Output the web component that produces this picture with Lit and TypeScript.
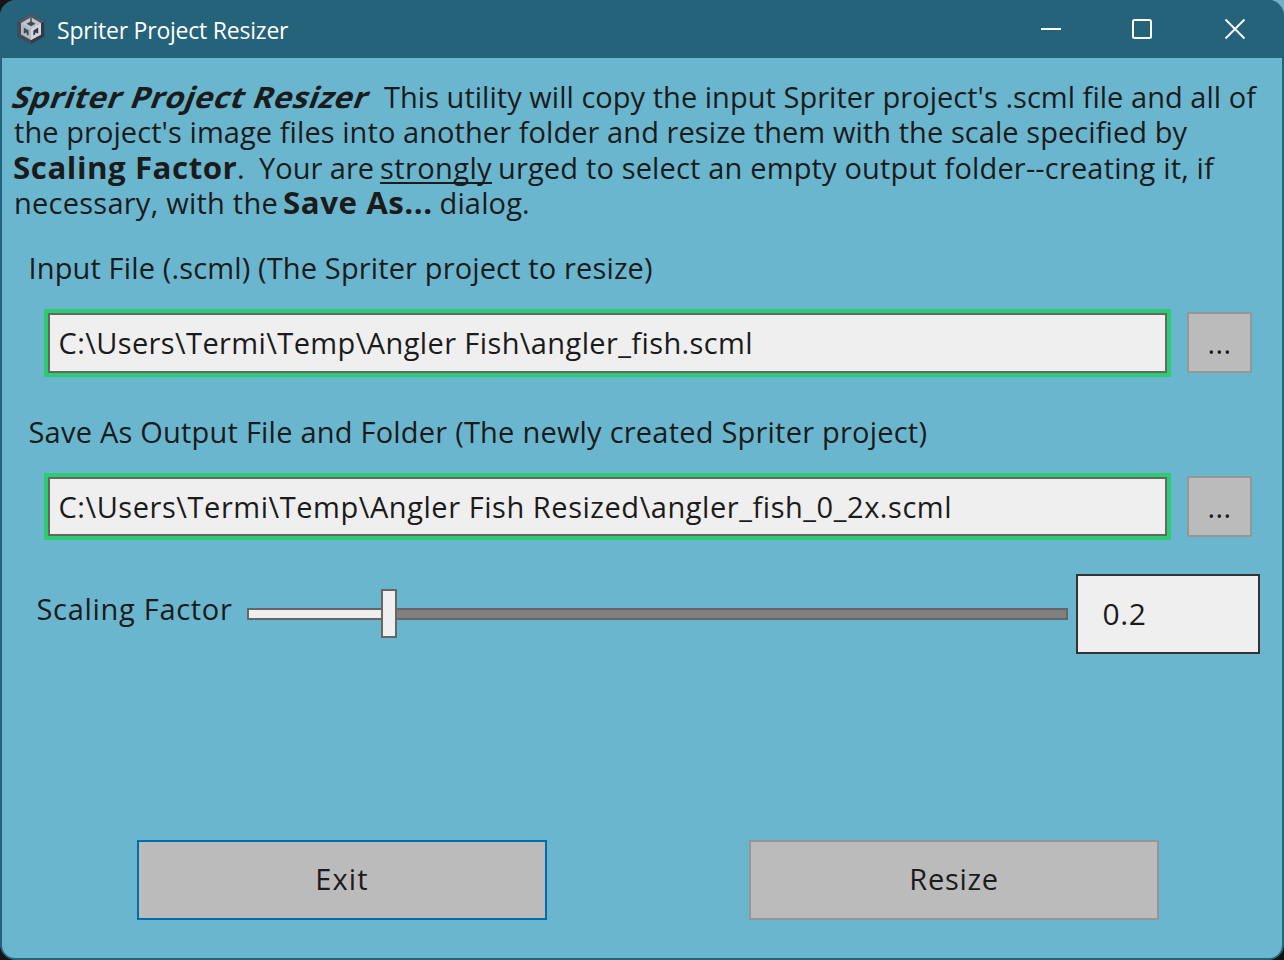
import { LitElement, html, css } from "lit";
import { customElement, property } from "lit/decorators.js";

@customElement("app-icon")
class AppIcon extends LitElement {
  static styles = css`
    :host { display: block; width: 28px; height: 30px; }
    svg { display: block; }
  `;
  render() {
    return html`<svg width="28" height="30" viewBox="0 0 28 30">
      <path d="M14 0 27.3 7.4V22.6L14 30 .7 22.6V7.4Z" fill="#343a42" />
      <path d="M14 0 27.3 7.4 14 15 .7 7.4Z" fill="#525962" />
      <path d="M.7 7.4 14 15V30L.7 22.6Z" fill="#454b54" />
      <path d="M14 3.6 24 9.2V20.4L14 26 4 20.4V9.2Z" fill="#b4bac4" />
      <path d="M14 3.6 24 9.2 14 15 4 9.2Z" fill="#bcc4ce" />
      <path d="M14 15 24 9.2V20.4L14 26Z" fill="#d3d7de" />
      <path d="M14 7.2 18.6 9.7 14 12.2 9.4 9.7Z" fill="#414951" />
      <path d="M14 3.2V8" stroke="#4d555e" stroke-width="1.6" />
      <path d="M6.8 13.6 11.6 16.4V21.6L9.8 20.5V18.6L6.8 19.6Z" fill="#444b54" />
      <path d="M21.2 13.6 16.4 16.4V21.6L18.2 20.5V18.6L21.2 19.6Z" fill="#343a42" />
    </svg>`;
  }
}

@customElement("title-bar")
class TitleBar extends LitElement {
  static styles = css`
    :host { display: flex; height: 58px; background: #25637a; color: #fff; padding-left: 17px; }
    app-icon { margin-top: 14px; }
    .name { margin-left: 12px; flex: 1; font-size: 23px; line-height: 32px; padding-top: 14px; letter-spacing: -0.22px; white-space: pre; }
    .controls { display: grid; grid-template-columns: 92px 92px 94px; }
    svg { display: block; width: 100%; height: 58px; fill: none; stroke: #fff; stroke-width: 2; }
  `;
  render() {
    return html`<app-icon></app-icon>
      <div class="name">Spriter Project Resizer</div>
      <div class="controls">
        <svg viewBox="0 0 92 58"><path d="M35 29H55" /></svg>
        <svg viewBox="0 0 92 58"><rect x="35" y="20" width="18" height="18" rx="1.5" /></svg>
        <svg viewBox="0 0 94 58"><path d="M35.5 19.5 54.5 38.5M54.5 19.5 35.5 38.5" stroke-width="1.8" /></svg>
      </div>`;
  }
}

@customElement("file-row")
class FileRow extends LitElement {
  @property() label = "";
  @property() value = "";
  static styles = css`
    :host { display: block; height: 161px; }
    * { box-sizing: border-box; }
    .label { height: 60px; line-height: 38px; padding-left: 26.5px; letter-spacing: 0.14px; white-space: pre; }
    .label.long { letter-spacing: 0.22px; }
    .row { display: flex; align-items: flex-start; padding-left: 42px; }
    .field { width: 1127px; height: 68px; border: 4px solid #2ecc71; }
    .field.long { height: 67px; }
    .box { height: 100%; border: 2px solid #666; background: #efefef; padding-left: 8.5px; line-height: 56px; letter-spacing: 0.39px; white-space: pre; }
    .long .box { line-height: 55px; letter-spacing: 0.55px; }
    .browse { width: 65px; height: 61px; margin: 3px 0 0 16px; border: 2px solid #969696; background: #bbb; text-align: center; line-height: 57px; letter-spacing: 0.3px; }
  `;
  render() {
    const size = this.value.length > 55 ? "long" : "";
    return html`<div class="label ${size}">${this.label}</div>
      <div class="row">
        <div class="field ${size}"><div class="box">${this.value}</div></div>
        <div class="browse">...</div>
      </div>`;
  }
}

@customElement("scale-slider")
class ScaleSlider extends LitElement {
  static styles = css`
    :host { display: flex; align-items: center; width: 821px; height: 49px; }
    * { box-sizing: border-box; }
    .low, .high { height: 12px; border: 2px solid #666; }
    .low { width: 134px; background: #efefef; border-right: 0; }
    .thumb { width: 16px; height: 49px; border: 2px solid #666; background: #efefef; }
    .high { flex: 1; background: #808080; border-left: 0; }
  `;
  render() {
    return html`<div class="low"></div><div class="thumb"></div><div class="high"></div>`;
  }
}

@customElement("app-root")
class AppRoot extends LitElement {
  static styles = css`
    :host { display: block; width: 1284px; height: 960px; background: linear-gradient(90deg, #161616 50%, transparent 50%), linear-gradient(#77adc9 50%, #111 50%); font-family: "Open Sans", sans-serif; font-size: 29px; color: #1b1b1b; }
    * { box-sizing: border-box; }
    .window { height: 960px; border-radius: 16px; overflow: hidden; background: #25637a; }
    .body { height: 902px; border: solid #25637a; border-width: 0 2px 2px; border-radius: 0 0 15px 15px; background: #6ab6ce; padding-top: 21px; }
    .intro { height: 170px; padding-left: 10px; }
    .line { display: flex; height: 35px; line-height: 35px; }
    .line:nth-child(2) { height: 36px; }
    .line span { flex: none; white-space: pre; }
    .bold { font-weight: 700; font-size: 29.5px; }
    .name { width: 374px; margin-left: -2px; letter-spacing: 0.4px; transform: skewX(-20deg) scaleX(1.06); transform-origin: 0 28px; }
    .l1 { letter-spacing: 0.03px; }
    .l2 { margin-left: 2px; letter-spacing: 0.07px; }
    .factor { width: 225px; padding-left: 1px; letter-spacing: 0.5px; transform: scaleX(1.06); transform-origin: 0 50%; }
    .dot { width: 22px; }
    .your { width: 121px; }
    .strong { width: 112px; margin-right: 6px; letter-spacing: 0.4px; background: linear-gradient(#1b1b1b, #1b1b1b) 0 32px / 100% 2px no-repeat; }
    .urged { letter-spacing: 0.16px; }
    .need { width: 271px; padding-left: 2px; letter-spacing: 0.25px; }
    .save { width: 156.5px; letter-spacing: 0.5px; transform: scaleX(1.06); transform-origin: 0 50%; }
    .dialog { letter-spacing: 0.15px; }
    file-row + file-row { margin-top: 3px; }
    .scale { display: flex; height: 266px; padding-left: 34.5px; }
    .caption { width: 210.5px; padding-top: 15px; line-height: 40px; letter-spacing: 0.7px; }
    scale-slider { margin-top: 15px; }
    .value { width: 184px; height: 80px; margin-left: 8px; border: 2px solid #333; background: #efefef; font-size: 30px; letter-spacing: 0.6px; line-height: 75px; padding-left: 24.5px; }
    .actions { display: flex; gap: 202px; padding-left: 135px; }
    .button { width: 410px; height: 80px; border: 2px solid #969696; background: #bbb; text-align: center; line-height: 74px; letter-spacing: 0.7px; }
    .focus { border-color: #006cab; letter-spacing: 1.1px; }
  `;
  render() {
    return html`<div class="window">
      <title-bar></title-bar>
      <div class="body">
        <div class="intro">
          <div class="line"><span class="bold name">Spriter Project Resizer</span><span class="l1">This utility will copy the input Spriter project's .scml file and all of</span></div>
          <div class="line"><span class="l2">the project's image files into another folder and resize them with the scale specified by</span></div>
          <div class="line"><span class="bold factor">Scaling Factor</span><span class="dot">.</span><span class="your">Your are</span><span class="strong">strongly</span><span class="urged">urged to select an empty output folder--creating it, if</span></div>
          <div class="line"><span class="need">necessary, with the</span><span class="bold save">Save As...</span><span class="dialog">dialog.</span></div>
        </div>
        <file-row label="Input File (.scml) (The Spriter project to resize)" value="C:\\Users\\Termi\\Temp\\Angler Fish\\angler_fish.scml"></file-row>
        <file-row label="Save As Output File and Folder (The newly created Spriter project)" value="C:\\Users\\Termi\\Temp\\Angler Fish Resized\\angler_fish_0_2x.scml"></file-row>
        <div class="scale">
          <div class="caption">Scaling Factor</div>
          <scale-slider></scale-slider>
          <div class="value">0.2</div>
        </div>
        <div class="actions">
          <div class="button focus">Exit</div>
          <div class="button">Resize</div>
        </div>
      </div>
    </div>`;
  }
}
